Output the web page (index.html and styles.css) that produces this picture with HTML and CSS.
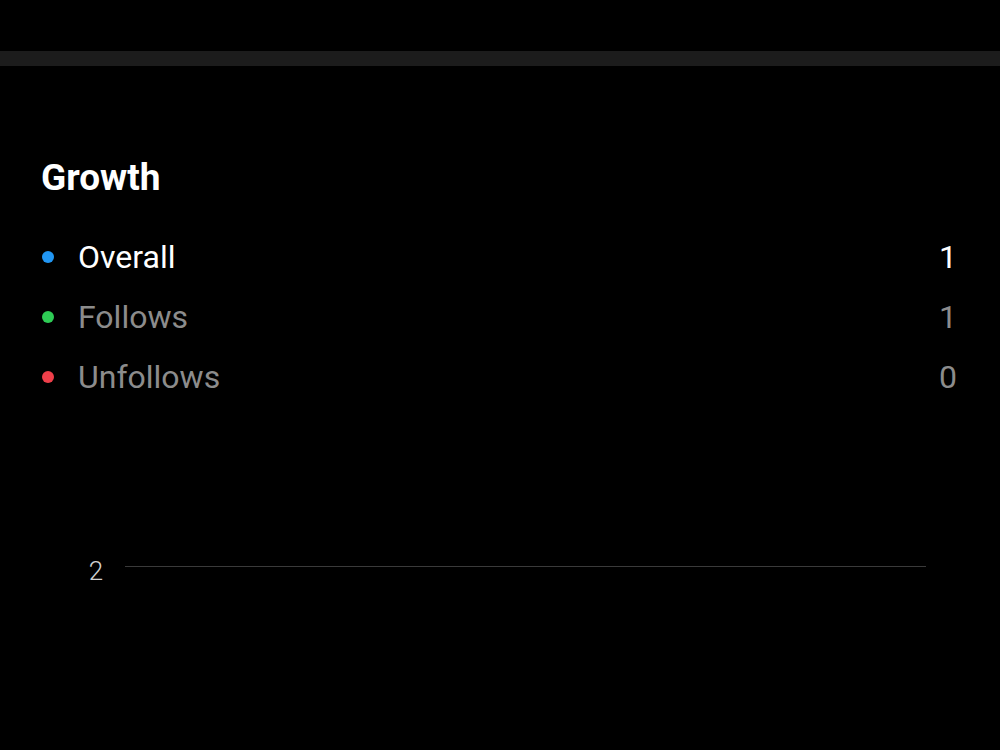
FILE: index.html
```html
<!DOCTYPE html>
<html lang="en">
<head>
<meta charset="utf-8">
<title>Growth</title>
<link rel="stylesheet" href="styles.css">
</head>
<body>
  <div class="topbar"></div>
  <main class="growth">
    <h2 class="growth-title">Growth</h2>
    <ul class="legend">
      <li class="legend-row is-active">
        <span class="dot dot-blue"></span>
        <span class="legend-label">Overall</span>
        <span class="legend-value">1</span>
      </li>
      <li class="legend-row">
        <span class="dot dot-green"></span>
        <span class="legend-label">Follows</span>
        <span class="legend-value">1</span>
      </li>
      <li class="legend-row">
        <span class="dot dot-red"></span>
        <span class="legend-label">Unfollows</span>
        <span class="legend-value">0</span>
      </li>
    </ul>
    <div class="chart">
      <div class="gridline">
        <span class="axis-label">2</span>
        <span class="rule"></span>
      </div>
    </div>
  </main>
</body>
</html>
```
FILE: styles.css
```css
html, body {
  margin: 0;
  padding: 0;
  background: #000;
  font-family: Roboto, "Noto Sans", sans-serif;
  color: #fff;
}

.topbar {
  margin-top: 51px;
  height: 15px;
  background: #1c1c1c;
}

.growth {
  padding: 0 43px 0 40px;
}

.growth-title {
  margin: 88px 0 0 1px;
  font-size: 37px;
  font-weight: 700;
  line-height: 48px;
  color: #fff;
}

.legend {
  list-style: none;
  margin: 25px 0 0;
  padding: 0;
  display: flex;
  flex-direction: column;
}

.legend-row {
  display: flex;
  align-items: center;
  height: 60px;
  font-size: 32px;
  color: #8c8c8c;
}

.legend-row.is-active {
  color: #fff;
}

.dot {
  width: 12px;
  height: 12px;
  border-radius: 50%;
  margin: 0 24px 0 2px;
  flex: none;
}

.dot-blue { background: #2196f3; }
.dot-green { background: #2ecc55; }
.dot-red { background: #ef3f4a; }

.legend-label {
  flex: 1;
}

.legend-value {
  text-align: right;
}

.chart {
  margin-top: 144px;
  padding: 0 31px 0 48px;
}

.gridline {
  display: flex;
  align-items: center;
  gap: 21px;
}

.axis-label {
  font-size: 26px;
  font-weight: 300;
  color: #cfcfcf;
  line-height: 30px;
  width: 16px;
  text-align: center;
  position: relative;
  top: 5px;
}

.rule {
  flex: 1;
  height: 1px;
  background: #3a3a3a;
}
```
